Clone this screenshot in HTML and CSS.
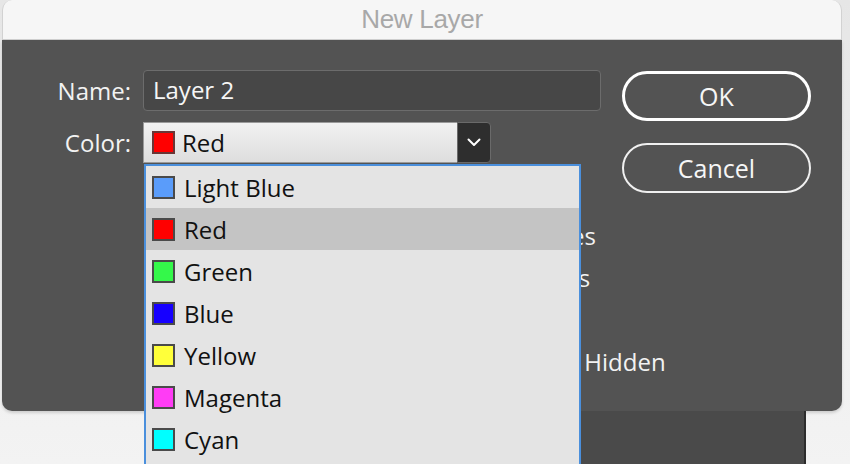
FILE: index.html
```html
<!DOCTYPE html>
<html>
<head>
<meta charset="utf-8">
<link rel="stylesheet" href="styles.css">
</head>
<body>
<div class="screen">
  <div class="window">
    <div class="titlebar">New Layer</div>
    <div class="dialog">
      <div class="form">
        <div class="row name-row">
          <label class="lbl">Name:</label>
          <div class="input">Layer 2</div>
        </div>
        <div class="row color-row">
          <label class="lbl">Color:</label>
          <div class="select">
            <div class="face"><span class="sw red"></span><span>Red</span></div>
            <div class="drop-btn">
              <svg width="14" height="9" viewBox="0 0 14 9"><path d="M1.5 1.5 L7 7 L12.5 1.5" fill="none" stroke="#fff" stroke-width="2" stroke-linecap="round" stroke-linejoin="round"/></svg>
            </div>
          </div>
        </div>
        <div class="options">
          <div class="opt c1"><span class="cb"></span>Show Layer</div>
          <div class="opt c2"><span class="cb"></span>Show Guides</div>
          <div class="opt c1"><span class="cb"></span>Lock Layer</div>
          <div class="opt c2 shift"><span class="cb"></span>Lock Guides</div>
          <div class="opt c1"><span class="cb"></span>Print Layer</div>
          <div class="opt wide"><span class="cb"></span>Suppress Text Wrap When Layer is Hidden</div>
        </div>
      </div>
      <div class="buttons">
        <div class="btn ok">OK</div>
        <div class="btn cancel">Cancel</div>
      </div>
    </div>
  </div>
  <div class="behind"></div>
  <ul class="menu">
    <li><span class="sw lightblue"></span>Light Blue</li>
    <li class="hl"><span class="sw red"></span>Red</li>
    <li><span class="sw green"></span>Green</li>
    <li><span class="sw blue"></span>Blue</li>
    <li><span class="sw yellow"></span>Yellow</li>
    <li><span class="sw magenta"></span>Magenta</li>
    <li><span class="sw cyan"></span>Cyan</li>
  </ul>
</div>
</body>
</html>
```

FILE: styles.css
```css
* { box-sizing: border-box; }
html, body { margin: 0; padding: 0; }
body {
  width: 850px;
  height: 464px;
  overflow: hidden;
  background: linear-gradient(to bottom, #e6e6e6 0%, #f3f3f3 100%);
  font-family: "Open Sans", "DejaVu Sans", sans-serif;
}
.screen {
  position: relative;
  width: 850px;
  height: 464px;
  overflow: hidden;
}
.window {
  margin-left: 2px;
  width: 840px;
}
.titlebar {
  height: 40px;
  background: #f6f6f6;
  border-radius: 10px 10px 0 0;
  border-left: 1px solid #d2d2d2;
  border-right: 1px solid #d2d2d2;
  border-bottom: 1px solid #cfcfcf;
  font-family: "Liberation Sans", Arial, sans-serif;
  font-size: 26px;
  color: #a8a8a8;
  text-align: center;
  line-height: 38px;
  letter-spacing: -0.3px;
}
.dialog {
  height: 371px;
  background: #535353;
  border-radius: 0 0 10px 10px;
  display: flex;
  gap: 21px;
  padding: 30px 31px 0 0;
  box-shadow: 0 2px 3px rgba(0,0,0,0.15);
}
.form {
  flex: 1;
  min-width: 0;
  display: flex;
  flex-direction: column;
}
.row {
  display: flex;
  align-items: center;
}
.lbl {
  width: 129px;
  margin-right: 12px;
  text-align: right;
  color: #f2f2f2;
  font-size: 24px;
  font-weight: 500;
}
.input {
  flex: 1;
  height: 41px;
  background: #474747;
  border: 1px solid #6c6c6c;
  border-radius: 4px;
  color: #f6f6f6;
  font-size: 24px;
  font-weight: 500;
  padding-left: 9px;
  line-height: 38px;
}
.color-row { margin-top: 11px; }
.select {
  display: flex;
  height: 41px;
}
.face {
  width: 314px;
  background: linear-gradient(to bottom, #f1f1f1, #dedede);
  border: 1px solid #9a9a9a;
  border-right: none;
  display: flex;
  align-items: center;
  padding-left: 8px;
  gap: 7px;
  font-size: 24px;
  color: #111;
}
.drop-btn {
  width: 34px;
  background: #2e2e2e;
  border: 1px solid #6a6a6a;
  border-radius: 0 4px 4px 0;
  display: flex;
  align-items: center;
  justify-content: center;
}
.sw {
  display: inline-block;
  width: 23px;
  height: 23px;
  border: 2px solid #4a4a4a;
  flex: none;
}
.face .sw { border-color: #6a3636; }
.red { background: #ff0000; }
.lightblue { background: #5a9cfa; }
.green { background: #34f84a; }
.blue { background: #1600ff; }
.yellow { background: #ffff3a; }
.magenta { background: #ff3cf5; }
.cyan { background: #00ffff; }

.options {
  margin-top: 51px;
  display: grid;
  grid-template-columns: 259px auto;
  grid-auto-rows: 42px;
  padding-left: 164px;
  color: #f2f2f2;
  font-size: 24px;
  font-weight: 500;
}
.opt {
  display: flex;
  align-items: center;
  gap: 8px;
  white-space: nowrap;
}
.opt.shift { margin-left: 4px; }
.opt.wide { grid-column: 1 / 3; grid-row: 4; }
.cb {
  width: 18px;
  height: 18px;
  border: 1px solid #aaa;
  border-radius: 3px;
  background: #3a3a3a;
}

.buttons {
  flex: none;
  width: 189px;
  display: flex;
  flex-direction: column;
  gap: 22px;
  padding-top: 1px;
}
.btn {
  height: 50px;
  border-radius: 25px;
  color: #f6f6f6;
  font-size: 25px;
  font-weight: 500;
  display: flex;
  align-items: center;
  justify-content: center;
}
.btn.ok { border: 3px solid #ffffff; }
.btn.cancel { border: 2px solid #f0f0f0; }

.behind {
  margin-left: 580px;
  width: 226px;
  height: 60px;
  background: #4a4a4a;
  border-right: 2px solid #2c2c2c;
}

.menu {
  position: absolute;
  left: 144px;
  top: 164px;
  width: 437px;
  height: 320px;
  margin: 0;
  padding: 0;
  list-style: none;
  background: #e4e4e4;
  border: 2px solid #4a8fdc;
}
.menu li {
  height: 42px;
  display: flex;
  align-items: center;
  gap: 9px;
  padding-left: 6px;
  font-size: 24px;
  color: #111;
}
.menu li.hl { background: #c4c4c4; }
```
